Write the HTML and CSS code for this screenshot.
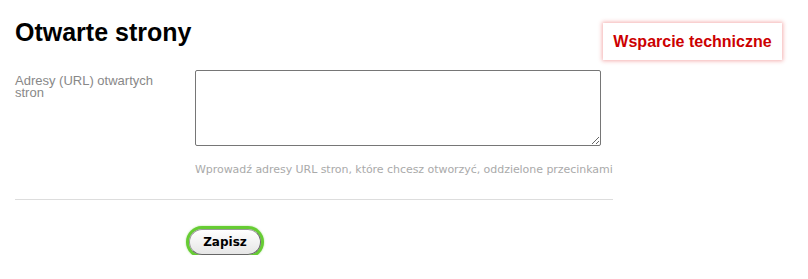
FILE: index.html
```html
<!DOCTYPE html>
<html lang="pl">
<head>
<meta charset="utf-8">
<title>Otwarte strony</title>
<link rel="stylesheet" href="styles.css">
</head>
<body>
<div class="page">
  <div class="main">
    <h1 class="title">Otwarte strony</h1>
    <div class="field">
      <label class="label" for="urls">Adresy (URL) otwartych stron</label>
      <div class="control">
        <textarea id="urls" class="input"></textarea>
        <p class="hint">Wprowadź adresy URL stron, które chcesz otworzyć, oddzielone przecinkami</p>
      </div>
    </div>
    <div class="divider"></div>
    <div class="actions">
      <button class="save" type="button">Zapisz</button>
    </div>
  </div>
  <aside class="side">
    <a class="support" href="#">Wsparcie techniczne</a>
  </aside>
</div>
</body>
</html>
```

FILE: styles.css
```css
html, body {
  margin: 0;
  padding: 0;
  background: #fff;
}
body {
  font-family: "Liberation Sans", Arial, sans-serif;
}
.page {
  display: flex;
  align-items: flex-start;
  padding: 0 0 0 15px;
}
.main {
  width: 598px;
  flex: none;
}
.title {
  margin: 0;
  padding-top: 18px;
  font-size: 25px;
  line-height: 29px;
  font-weight: bold;
  color: #000;
}
.field {
  display: flex;
  margin-top: 23px;
}
.label {
  width: 150px;
  flex: none;
  margin-right: 30px;
  padding-top: 5px;
  font-size: 13px;
  line-height: 12px;
  color: #888;
}
.control {
  display: flex;
  flex-direction: column;
}
.input {
  display: block;
  box-sizing: border-box;
  width: 406px;
  height: 76px;
  margin: 0;
  border: 1px solid #767676;
  border-radius: 2px;
  resize: vertical;
}
.hint {
  margin: 17px 0 0;
  font-family: "DejaVu Sans", Verdana, sans-serif;
  font-size: 11px;
  line-height: 14px;
  letter-spacing: -0.05px;
  color: #aaa;
  white-space: nowrap;
}
.divider {
  margin-top: 22px;
  height: 1px;
  background: #ddd;
}
.actions {
  padding: 29px 0 0 174px;
}
.save {
  box-sizing: border-box;
  width: 72px;
  height: 26px;
  padding: 0;
  border: 1px solid #999;
  border-right-color: #666;
  border-bottom-color: #666;
  border-radius: 13px;
  background: linear-gradient(#ffffff, #e6e6e6);
  box-shadow: 0 0 0 3px #66cc33, 0 0 2px 3px rgba(102, 204, 51, 0.6);
  font-family: "DejaVu Sans", Verdana, sans-serif;
  font-size: 12px;
  font-weight: bold;
  color: #000;
  cursor: pointer;
}
.side {
  padding-top: 23px;
  margin-left: -10px;
}
.support {
  display: block;
  box-sizing: border-box;
  width: 179px;
  height: 37px;
  line-height: 37px;
  text-align: center;
  background: #fff;
  box-shadow: 0 0 4px 1px rgba(230, 80, 80, 0.45);
  color: #cc0000;
  font-size: 16px;
  font-weight: bold;
  text-decoration: none;
}
```
